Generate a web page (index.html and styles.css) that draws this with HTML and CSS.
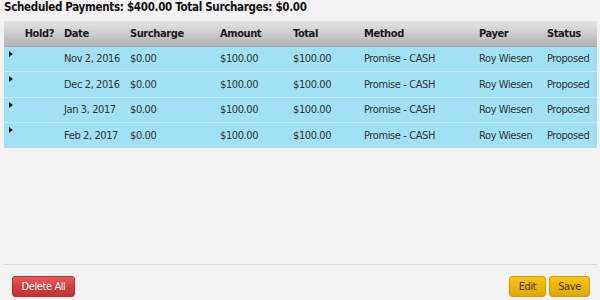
FILE: index.html
```html
<!DOCTYPE html>
<html lang="en">
    <head>
        <meta charset="UTF-8">
        <title>Scheduled Payments</title>
        <link rel="stylesheet" href="styles.css">
    </head>
    <body>
        <div class="page">
            <h1 class="summary">Scheduled Payments: $400.00 Total Surcharges: $0.00</h1>

            <table class="payments">
                <colgroup>
                    <col class="c-hold">
                    <col class="c-date">
                    <col class="c-surcharge">
                    <col class="c-amount">
                    <col class="c-total">
                    <col class="c-method">
                    <col class="c-payer">
                    <col class="c-status">
                </colgroup>
                <thead>
                    <tr>
                        <th class="hold">Hold?</th>
                        <th>Date</th>
                        <th>Surcharge</th>
                        <th>Amount</th>
                        <th>Total</th>
                        <th>Method</th>
                        <th>Payer</th>
                        <th>Status</th>
                    </tr>
                </thead>
                <tbody>
                    <tr>
                        <td class="expand"><span class="arrow"></span></td>
                        <td>Nov 2, 2016</td>
                        <td>$0.00</td>
                        <td>$100.00</td>
                        <td>$100.00</td>
                        <td>Promise - CASH</td>
                        <td>Roy Wiesen</td>
                        <td>Proposed</td>
                    </tr>
                    <tr>
                        <td class="expand"><span class="arrow"></span></td>
                        <td>Dec 2, 2016</td>
                        <td>$0.00</td>
                        <td>$100.00</td>
                        <td>$100.00</td>
                        <td>Promise - CASH</td>
                        <td>Roy Wiesen</td>
                        <td>Proposed</td>
                    </tr>
                    <tr>
                        <td class="expand"><span class="arrow"></span></td>
                        <td>Jan 3, 2017</td>
                        <td>$0.00</td>
                        <td>$100.00</td>
                        <td>$100.00</td>
                        <td>Promise - CASH</td>
                        <td>Roy Wiesen</td>
                        <td>Proposed</td>
                    </tr>
                    <tr>
                        <td class="expand"><span class="arrow"></span></td>
                        <td>Feb 2, 2017</td>
                        <td>$0.00</td>
                        <td>$100.00</td>
                        <td>$100.00</td>
                        <td>Promise - CASH</td>
                        <td>Roy Wiesen</td>
                        <td>Proposed</td>
                    </tr>
                </tbody>
            </table>

            <div class="footer">
                <button class="btn btn-red">Delete All</button>
                <div class="footer-right">
                    <button class="btn btn-yellow">Edit</button>
                    <button class="btn btn-yellow">Save</button>
                </div>
            </div>
        </div>
    </body>
</html>
```

FILE: styles.css
```css
* {
    margin: 0;
    padding: 0;
    box-sizing: border-box;
}

body {
    background: #f2f2f2;
    color: #222;
    font-family: 'DejaVu Sans Condensed', 'DejaVu Sans', sans-serif;
    font-size: 11px;
    letter-spacing: -0.4px;
}

.page {
    height: 300px;
    display: flex;
    flex-direction: column;
}

.summary {
    font-size: 11.5px;
    font-weight: bold;
    line-height: 15px;
    padding-left: 4px;
    color: #111;
    margin-bottom: 6px;
    letter-spacing: -0.3px;
}

.payments {
    margin: 0 3px 0 4px;
    width: 593px;
    table-layout: fixed;
    border-collapse: collapse;
}

.c-hold { width: 56px; }
.c-date { width: 66px; }
.c-surcharge { width: 90px; }
.c-amount { width: 73px; }
.c-total { width: 71px; }
.c-method { width: 115px; }
.c-payer { width: 68px; }
.c-status { width: 54px; }

.payments th {
    height: 25px;
    text-align: left;
    font-weight: bold;
    color: #1a1a1a;
    padding-left: 4px;
    background: linear-gradient(#e4e4e4, #cfcfcf 45%, #bcbcbc 80%, #b6b6b6);
    border-bottom: 1px solid #a8a8a8;
    white-space: nowrap;
}

.payments th.hold {
    text-align: right;
    padding-right: 6px;
}

.payments td {
    height: 25.6px;
    background: #a2e0f6;
    color: #333;
    padding-left: 4px;
    white-space: nowrap;
    border-top: 1px solid #c6ebf8;
}

.payments tbody tr:first-child td {
    border-top: none;
}

.payments td.expand {
    vertical-align: top;
    padding: 4px 0 0 5px;
}

.arrow {
    display: block;
    width: 0;
    height: 0;
    border-top: 3px solid transparent;
    border-bottom: 3px solid transparent;
    border-left: 4px solid #111;
}

.footer {
    margin: auto 3px 0 4px;
    border-top: 1px solid #dadada;
    padding: 11px 7px 3px 8px;
    display: flex;
    justify-content: space-between;
}

.footer-right {
    display: flex;
    gap: 3px;
}

.btn {
    height: 21px;
    font-family: 'DejaVu Sans Condensed', 'DejaVu Sans', sans-serif;
    font-size: 11px;
    letter-spacing: -0.4px;
    border-radius: 3px;
    cursor: pointer;
}

.btn-red {
    width: 63px;
    color: #fff;
    background: linear-gradient(#e95a5a, #d13c3c 60%, #c23333);
    border: 1px solid #b83030;
    text-shadow: 0 0 1px rgba(0, 0, 0, 0.3);
}

.btn-yellow {
    color: #4a3800;
    background: linear-gradient(#f6c316, #eab208 60%, #dfa800);
    border: 1px solid #d29f00;
}

.btn-yellow:first-child {
    width: 37px;
}

.btn-yellow:last-child {
    width: 41px;
}
```
